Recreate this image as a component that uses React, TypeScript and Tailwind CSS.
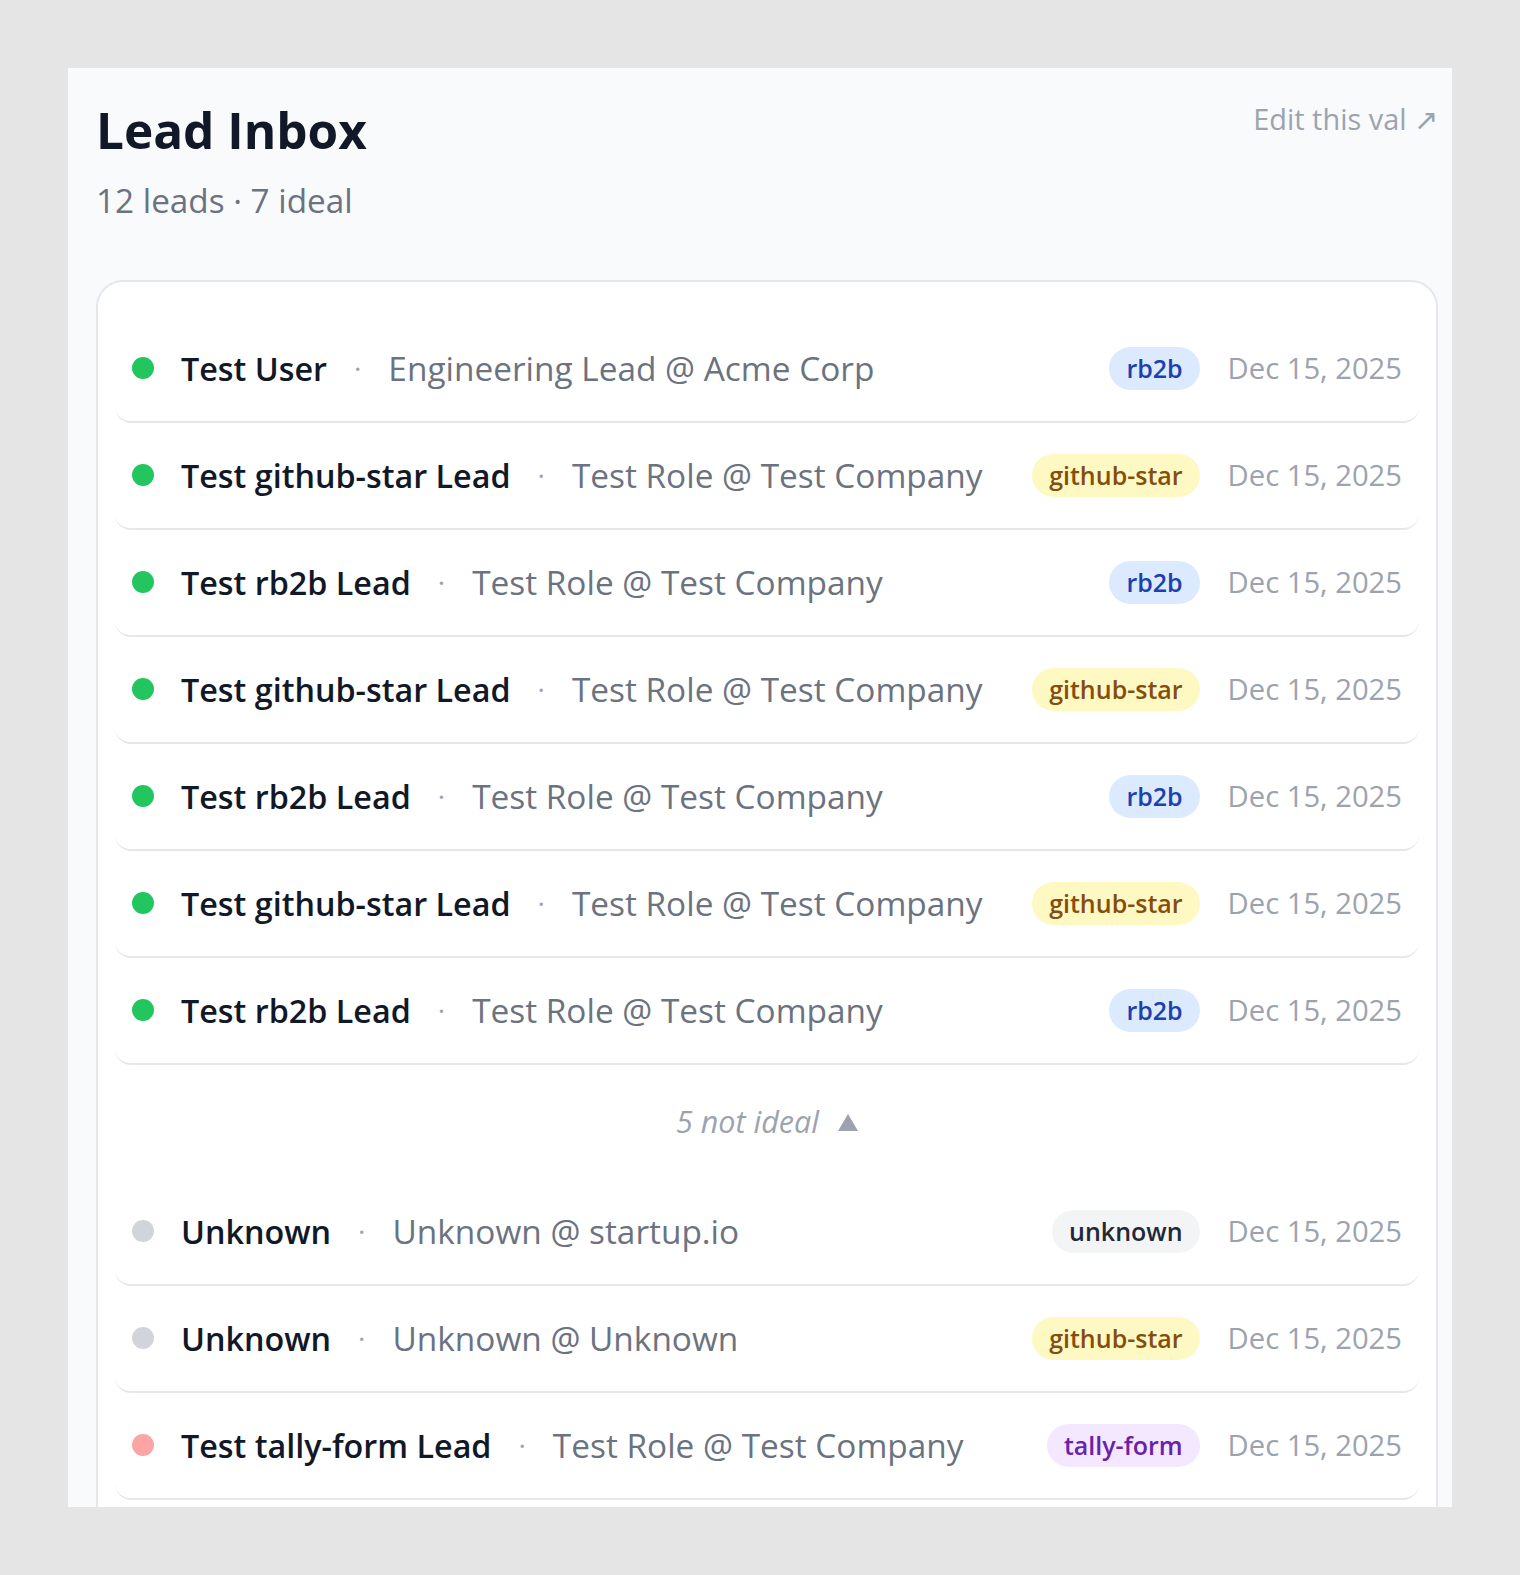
import React from "react";

type Source = "rb2b" | "github-star" | "tally-form" | "unknown";

interface Lead {
  name: string;
  role: string;
  source: Source;
  date: string;
  dot: string;
}

const badgeStyles: Record<Source, string> = {
  rb2b: "bg-[#dbeafe] text-[#1e40af]",
  "github-star": "bg-[#fef9c3] text-[#854d0e]",
  "tally-form": "bg-[#f3e8ff] text-[#6b21a8]",
  unknown: "bg-[#f3f4f6] text-[#1f2937]",
};

const ideal: Lead[] = [
  { name: "Test User", role: "Engineering Lead @ Acme Corp", source: "rb2b", date: "Dec 15, 2025", dot: "bg-[#22c55e]" },
  { name: "Test github-star Lead", role: "Test Role @ Test Company", source: "github-star", date: "Dec 15, 2025", dot: "bg-[#22c55e]" },
  { name: "Test rb2b Lead", role: "Test Role @ Test Company", source: "rb2b", date: "Dec 15, 2025", dot: "bg-[#22c55e]" },
  { name: "Test github-star Lead", role: "Test Role @ Test Company", source: "github-star", date: "Dec 15, 2025", dot: "bg-[#22c55e]" },
  { name: "Test rb2b Lead", role: "Test Role @ Test Company", source: "rb2b", date: "Dec 15, 2025", dot: "bg-[#22c55e]" },
  { name: "Test github-star Lead", role: "Test Role @ Test Company", source: "github-star", date: "Dec 15, 2025", dot: "bg-[#22c55e]" },
  { name: "Test rb2b Lead", role: "Test Role @ Test Company", source: "rb2b", date: "Dec 15, 2025", dot: "bg-[#22c55e]" },
];

// only the first three "not ideal" rows fit in the frame
const notIdeal: Lead[] = [
  { name: "Unknown", role: "Unknown @ startup.io", source: "unknown", date: "Dec 15, 2025", dot: "bg-[#d1d5db]" },
  { name: "Unknown", role: "Unknown @ Unknown", source: "github-star", date: "Dec 15, 2025", dot: "bg-[#d1d5db]" },
  { name: "Test tally-form Lead", role: "Test Role @ Test Company", source: "tally-form", date: "Dec 15, 2025", dot: "bg-[#fca5a5]" },
];

const LeadRow = ({ lead }: { lead: Lead }) => (
  <div className="flex items-center h-[107px] px-[17px] border-b-2 border-[#e5e7eb] rounded-[16px]">
    <div className="flex items-center gap-[27px] min-w-0 flex-1">
      <span className={`w-[22px] h-[22px] rounded-full shrink-0 ${lead.dot}`}></span>
      <span className="font-semibold text-[#111827] text-[32.3px] whitespace-nowrap">{lead.name}</span>
      <span className="text-[#9ca3af] text-[28px]">·</span>
      <span className="text-[#6b7280] text-[33.4px] whitespace-nowrap">{lead.role}</span>
    </div>
    <div className="flex items-center gap-[28px] shrink-0">
      <span className={`h-[43px] px-[17px] rounded-full flex items-center text-[25px] font-semibold ${badgeStyles[lead.source]}`}>
        {lead.source}
      </span>
      <span className="text-[#9ca3af] text-[29.2px] whitespace-nowrap">{lead.date}</span>
    </div>
  </div>
);

export default function App() {
  return (
    <div className="min-h-screen bg-[#e5e5e5] p-[68px]" style={{ fontFamily: '"Open Sans", "Noto Sans", sans-serif' }}>
      <div className="h-[1439px] overflow-hidden bg-[#f9fafb] pt-[30px] pl-[28px] pr-[14px]">
        <div className="flex justify-between items-start">
          <div>
            <h1 className="text-[49.5px] leading-[65px] font-bold text-[#111827]">Lead Inbox</h1>
            <p className="mt-[13px] text-[33.3px] leading-[48px] text-[#6b7280]">12 leads · 7 ideal</p>
          </div>
          <a className="text-[28.9px] leading-[42px] text-[#9ca3af]">Edit this val ↗</a>
        </div>

        <div className="mt-[56px] bg-white border-2 border-[#e5e7eb] rounded-[27px] pt-[34px] pb-[34px] px-[17px]">
          {ideal.map((lead, i) => (
            <LeadRow key={i} lead={lead} />
          ))}

          <div className="h-[114px] flex items-center justify-center gap-[19px] text-[#9ca3af]">
            <span className="italic text-[30.5px]">5 not ideal</span>
            <svg width="20" height="17" viewBox="0 0 20 17">
              <polygon points="10,0 20,17 0,17" fill="#9ca3af" />
            </svg>
          </div>

          {notIdeal.map((lead, i) => (
            <LeadRow key={i} lead={lead} />
          ))}
        </div>
      </div>
    </div>
  );
}
